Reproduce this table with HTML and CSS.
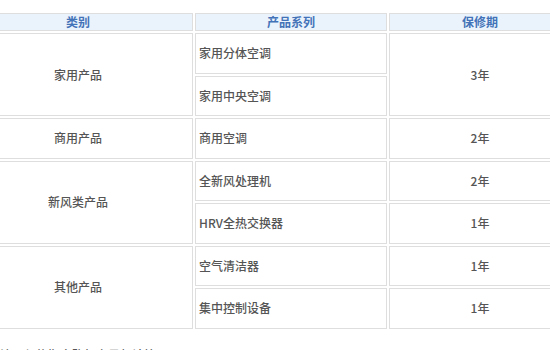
FILE: index.html
```html
<!DOCTYPE html>
<html lang="zh-CN">
<head>
<meta charset="utf-8">
<title>保修期</title>
<link rel="stylesheet" href="styles.css">
</head>
<body>
<div class="page">
  <table class="warranty">
    <colgroup>
      <col class="c1">
      <col class="c2">
      <col class="c3">
    </colgroup>
    <thead>
      <tr class="head">
        <th>类别</th>
        <th>产品系列</th>
        <th>保修期</th>
      </tr>
    </thead>
    <tbody>
      <tr>
        <td class="cat" rowspan="2">家用产品</td>
        <td class="series">家用分体空调</td>
        <td class="term" rowspan="2">3年</td>
      </tr>
      <tr>
        <td class="series">家用中央空调</td>
      </tr>
      <tr>
        <td class="cat">商用产品</td>
        <td class="series">商用空调</td>
        <td class="term">2年</td>
      </tr>
      <tr>
        <td class="cat" rowspan="2">新风类产品</td>
        <td class="series">全新风处理机</td>
        <td class="term">2年</td>
      </tr>
      <tr>
        <td class="series">HRV全热交换器</td>
        <td class="term">1年</td>
      </tr>
      <tr>
        <td class="cat" rowspan="2">其他产品</td>
        <td class="series">空气清洁器</td>
        <td class="term">1年</td>
      </tr>
      <tr>
        <td class="series">集中控制设备</td>
        <td class="term">1年</td>
      </tr>
    </tbody>
  </table>
  <p class="note">注：保修期自购机之日起计算。</p>
</div>
</body>
</html>
```

FILE: styles.css
```css
html, body {
  margin: 0;
  padding: 0;
  background: #ffffff;
}

body {
  font-family: "Noto Sans CJK SC", "Microsoft YaHei", sans-serif;
  font-size: 12px;
  font-weight: 500;
  color: #555555;
  overflow: hidden;
}

.page {
  padding-top: 11px;
  margin-left: -39px;
}

.warranty {
  border-collapse: separate;
  border-spacing: 2px;
  table-layout: fixed;
  width: 612px;
}

.c1 { width: 230px; }
.c2 { width: 192px; }
.c3 { width: 182px; }

.warranty th,
.warranty td {
  border: 1px solid #dedede;
  padding: 0 3px;
  vertical-align: middle;
  line-height: 16px;
  box-sizing: border-box;
}

.head th {
  height: 18px;
  background: #eaf3fc;
  color: #4272b8;
  font-weight: bold;
  text-align: center;
  padding: 0;
}

.warranty tbody tr {
  height: 40.5px;
}

.cat,
.term {
  text-align: center;
}

.series {
  text-align: left;
}

.note {
  margin: 16px 0 0 39px;
  padding: 0;
  font-size: 12px;
  line-height: 16px;
  color: #555555;
}
```
